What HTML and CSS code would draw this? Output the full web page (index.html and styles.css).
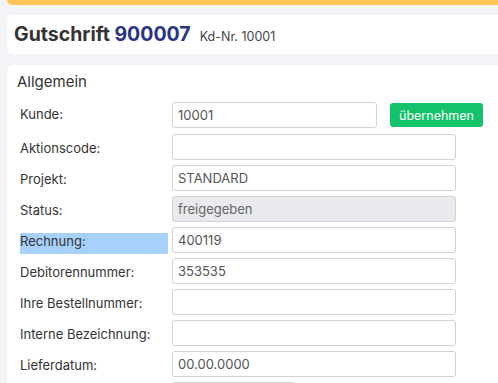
FILE: index.html
```html
<!DOCTYPE html>
<html lang="de">
<head>
<meta charset="utf-8">
<title>Gutschrift 900007</title>
<link rel="stylesheet" href="styles.css">
</head>
<body>
<div class="page">
  <div class="topbar"></div>
  <div class="card header">
    <h1 class="title">Gutschrift <span class="docnr">900007</span></h1>
    <span class="kdnr">Kd-Nr. 10001</span>
  </div>
  <div class="card main">
    <h2 class="section">Allgemein</h2>
    <div class="form">
      <div class="row first">
        <label class="lbl">Kunde:</label>
        <div class="ctrl">
          <input class="inp short" value="10001">
          <button class="btn">übernehmen</button>
        </div>
      </div>
      <div class="row">
        <label class="lbl">Aktionscode:</label>
        <div class="ctrl"><input class="inp" value=""></div>
      </div>
      <div class="row">
        <label class="lbl">Projekt:</label>
        <div class="ctrl"><input class="inp" value="STANDARD"></div>
      </div>
      <div class="row">
        <label class="lbl">Status:</label>
        <div class="ctrl"><input class="inp disabled" value="freigegeben" disabled></div>
      </div>
      <div class="row">
        <label class="lbl selected">Rechnung:</label>
        <div class="ctrl"><input class="inp" value="400119"></div>
      </div>
      <div class="row">
        <label class="lbl">Debitorennummer:</label>
        <div class="ctrl"><input class="inp" value="353535"></div>
      </div>
      <div class="row">
        <label class="lbl">Ihre Bestellnummer:</label>
        <div class="ctrl"><input class="inp" value=""></div>
      </div>
      <div class="row">
        <label class="lbl">Interne Bezeichnung:</label>
        <div class="ctrl"><input class="inp" value=""></div>
      </div>
      <div class="row">
        <label class="lbl">Lieferdatum:</label>
        <div class="ctrl"><input class="inp" value="00.00.0000"></div>
      </div>
      <div class="row">
        <span class="lbl"></span>
        <div class="ctrl"><input class="inp small" value=""></div>
      </div>
    </div>
  </div>
</div>
</body>
</html>
```

FILE: styles.css
```css
html, body {
  margin: 0;
  padding: 0;
  overflow: hidden;
}
body {
  background: #f3f4f8;
  font-family: Inter, "Noto Sans", sans-serif;
  color: #333;
}
.page {
  width: 560px;
  padding-left: 7px;
}
.topbar {
  height: 5px;
  background: #fec457;
  border-radius: 0 0 6px 6px;
  margin-bottom: 10px;
}
.card {
  background: #fff;
  border-radius: 6px;
}
.header {
  height: 39px;
  display: flex;
  align-items: baseline;
  padding-left: 7px;
  line-height: 39px;
  margin-bottom: 11px;
}
.title {
  margin: 0;
  font-size: 19.5px;
  font-weight: 700;
  color: #333;
}
.docnr {
  color: #283584;
}
.kdnr {
  font-size: 12.5px;
  color: #444;
  margin-left: 9px;
}
.main {
  padding: 7px 10px 20px 10px;
}
.section {
  margin: 0 0 10px 0;
  font-size: 15px;
  font-weight: 400;
  line-height: 20px;
  color: #333;
}
.form {
  padding-left: 3px;
  display: flex;
  flex-direction: column;
  gap: 5px;
}
.row {
  display: flex;
  align-items: flex-start;
  gap: 4px;
}
.row.first {
  margin-bottom: 1px;
}
.lbl {
  width: 148px;
  flex: none;
  height: 21px;
  margin-top: 6px;
  margin-bottom: -1px;
  font-size: 13px;
  line-height: 16px;
  color: #333;
}
.row.first .lbl {
  margin-top: 4px;
  margin-bottom: 1px;
}
.lbl.selected {
  background: #a7d1fb;
}
.ctrl {
  display: flex;
  align-items: center;
  gap: 13px;
}
.inp {
  box-sizing: border-box;
  width: 284px;
  height: 26px;
  margin: 0;
  padding: 0 5px;
  border: 1px solid #d2d2d2;
  border-radius: 3px;
  background: #fff;
  font-family: Inter, "Noto Sans", sans-serif;
  font-size: 13px;
  color: #555;
  outline: none;
}
.inp.short {
  width: 205px;
}
.inp.small {
  width: 123px;
}
.inp.disabled {
  background: #e9eaee;
  color: #666;
}
.btn {
  height: 24px;
  width: 93px;
  padding: 0;
  border: none;
  border-radius: 3px;
  background: #14c26a;
  color: #fff;
  font-family: Inter, "Noto Sans", sans-serif;
  font-size: 12.5px;
  font-weight: 400;
}
```
